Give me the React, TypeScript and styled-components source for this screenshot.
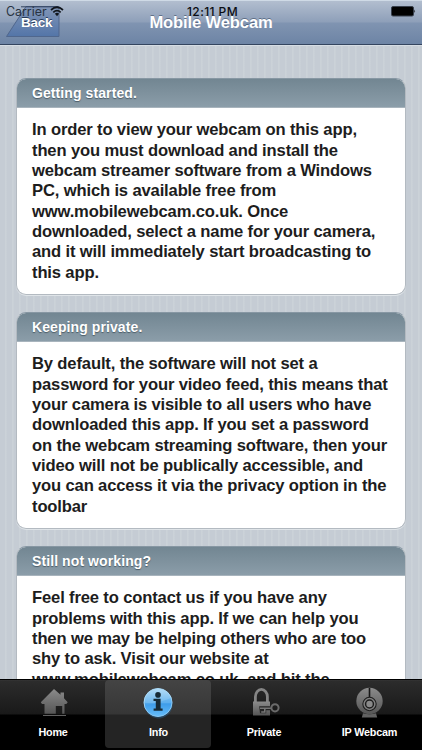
import React from 'react';
import styled, { createGlobalStyle } from 'styled-components';

const GlobalStyle = createGlobalStyle`
  * { box-sizing: border-box; }
  body { margin: 0; overflow: hidden; font-family: "Liberation Sans", Arial, sans-serif; }
`;

const Screen = styled.div`
  width: 422px;
  height: 750px;
  display: flex;
  flex-direction: column;
  overflow: hidden;
  background: repeating-linear-gradient(90deg, #c5ccd4 0, #c5ccd4 4.6px, #cbd2d8 5.4px, #cbd2d8 6.2px, #c5ccd4 7px);
`;

const NavBar = styled.header`
  position: relative;
  flex: none;
  height: 45px;
  border-top: 1px solid #cfdae6;
  border-bottom: 1px solid #34455f;
  background: linear-gradient(#b2becf 0, #8e9fb9 21px, #8094b1 22px, #6d84a5 100%);
`;

const NavTitle = styled.h1`
  position: relative;
  margin: 0;
  padding-top: 12px;
  text-align: center;
  font-size: 16.6px;
  letter-spacing: -0.15px;
  line-height: 20px;
  color: #fff;
  text-shadow: 0 -1px 0 rgba(40, 55, 80, 0.5);
`;

const BackButton = styled.button`
  position: absolute;
  left: 6px;
  top: 5px;
  width: 54px;
  height: 31px;
  padding: 0;
  border: 0;
  background: none;
  svg { display: block; }
`;

const BackLabel = styled.span`
  position: absolute;
  left: 15px;
  top: 8px;
  font: bold 13.5px/18px "Liberation Sans", Arial, sans-serif;
  letter-spacing: -0.25px;
  color: #fff;
  text-shadow: 0 -1px 0 #263956;
`;

const StatusBar = styled.div`
  position: absolute;
  inset: 3px 6px auto 6px;
  display: grid;
  grid-template-columns: 1fr auto 1fr;
  align-items: center;
  height: 15px;
  font: 12.4px/15px Inter, "Liberation Sans", sans-serif;
  color: #0b0d12;
`;

const Carrier = styled.div`
  display: flex;
  align-items: center;
  gap: 3px;
  color: #283342;
`;

const Clock = styled.div`
  font-weight: 500;
  font-size: 12px;
  letter-spacing: 0.4px;
  padding-left: 3px;
`;

const Battery = styled.svg`
  justify-self: end;
`;

const Content = styled.main`
  flex: 1;
  min-height: 0;
  overflow: hidden;
  padding: 32px 16px 0;
  border-top: 1px solid #d6dde4;
  display: flex;
  flex-direction: column;
  gap: 17px;
`;

const Card = styled.section`
  flex: none;
  height: 217px;
  border: 1px solid #b3bac1;
  border-top-color: #8797a3;
  border-radius: 10px;
  overflow: hidden;
  background: #fff;
  box-shadow: 0 1px 0 #dfe4e8;
`;

const CardHeading = styled.h2`
  margin: 0;
  height: 29px;
  padding: 0 15px;
  border-bottom: 1px solid #a8b4bd;
  background: linear-gradient(#728692, #8b9da9);
  color: #fff;
  font-size: 14px;
  letter-spacing: 0.09px;
  line-height: 28px;
  text-shadow: 0 1px 1px #4b5c67;
`;

const CardText = styled.p`
  margin: 0;
  padding: 12.4px 0 0 15px;
  font-size: 16.6px;
  letter-spacing: -0.15px;
  font-weight: bold;
  line-height: 20.35px;
  color: #1d1d1d;
  white-space: pre;
`;

const TabBar = styled.nav`
  flex: none;
  height: 71px;
  display: grid;
  grid-template-columns: 105px 106px 105px 106px;
  border-top: 1px solid #000;
  background: linear-gradient(#373737 0, #2c2c2c 1px, #191919 34px, #000 35px);
`;

const Tab = styled.button<{ $active?: boolean }>`
  display: flex;
  flex-direction: column;
  align-items: center;
  height: 68px;
  border: 0;
  border-radius: 4px;
  padding: 7px 0 0;
  background: ${(p) => (p.$active ? 'linear-gradient(#444 0, #363636 34px, #242424 35px)' : 'none')};
  svg { display: block; }
`;

const TabLabel = styled.span`
  margin-top: 6px;
  padding-left: 1px;
  font: bold 10.8px/14px "Liberation Sans", Arial, sans-serif;
  letter-spacing: -0.2px;
  color: #fff;
`;

const Gradient = ({ id }: { id: string }) => (
  <defs>
    <linearGradient id={id} x1="0" y1="0" x2="0" y2="1">
      <stop offset="0" stopColor="#8b8b8b" />
      <stop offset="1" stopColor="#555" />
    </linearGradient>
  </defs>
);

const HomeIcon = () => (
  <svg width="32" height="32" viewBox="0 0 32 32">
    <Gradient id="home" />
    <path d="M17 2L23.5 7.8V5.4H27v5.8l3.7 4.1-1.4 1.7h-1.8v9.8h-2.3V19h-6.4v7.8H7.5V17H5l-1.2-1.7z" fill="url(#home)" />
    <path d="M6 28.5h23" stroke="#606060" strokeWidth="1" />
  </svg>
);

const InfoIcon = () => (
  <svg width="32" height="32" viewBox="0 0 32 32">
    <defs>
      <linearGradient id="info" x1="0" y1="0" x2="0" y2="1">
        <stop offset="0" stopColor="#b4dcf6" />
        <stop offset=".5" stopColor="#70b9ef" />
        <stop offset=".55" stopColor="#45a0e9" />
        <stop offset="1" stopColor="#7ccbff" />
      </linearGradient>
    </defs>
    <circle cx="16" cy="15.5" r="14" fill="url(#info)" stroke="#a9daf8" />
    <path d="M2.6 18.5C11 18 21 14 29 11a14 14 0 1 1-26.4 7.5z" fill="#2792eb" opacity=".25" />
    <circle cx="16" cy="7.9" r="2.8" fill="#172a35" />
    <path d="M11.5 11.7h7.1v9.8h2v2.2h-9v-2.2h2.2v-7.5h-2.3z" fill="#172a35" />
  </svg>
);

const LockIcon = () => (
  <svg width="32" height="32" viewBox="0 0 32 32">
    <Gradient id="lock" />
    <path d="M7.4 15V9.7a6 7.3 0 0 1 12 0V15" fill="none" stroke="#858585" strokeWidth="2.8" />
    <path d="M5 14.5H22V28.5H5z" fill="url(#lock)" />
    <path d="M11.2 19.2H23v4.1h-4.8v3H12z" fill="#242424" />
    <path d="M12 21.2h11M16.8 21v4h-3.6" stroke="#777" strokeWidth="1.6" fill="none" />
    <circle cx="27" cy="20.8" r="3.6" fill="none" stroke="#6b6b6b" strokeWidth="2" />
  </svg>
);

const WebcamIcon = () => (
  <svg width="32" height="32" viewBox="0 0 32 32">
    <Gradient id="cam" />
    <circle cx="16.5" cy="14" r="13.2" fill="url(#cam)" />
    <path d="M16.5 1v10" stroke="#171717" strokeWidth="1.6" />
    <circle cx="16.5" cy="17" r="7.2" fill="#1c1c1c" />
    <circle cx="16.5" cy="17" r="5.4" fill="none" stroke="#808080" strokeWidth="1.5" />
    <circle cx="16.5" cy="17" r="3.2" fill="#8a8a8a" />
    <path d="M10 26.2q6.5 2 13 0l1.2 4.2H8.8z" fill="#626262" />
  </svg>
);

const cards = [
  {
    title: 'Getting started.',
    text: `In order to view your webcam on this app,
then you must download and install the
webcam streamer software from a Windows
PC, which is available free from
www.mobilewebcam.co.uk. Once
downloaded, select a name for your camera,
and it will immediately start broadcasting to
this app.`,
  },
  {
    title: 'Keeping private.',
    text: `By default, the software will not set a
password for your video feed, this means that
your camera is visible to all users who have
downloaded this app. If you set a password
on the webcam streaming software, then your
video will not be publically accessible, and
you can access it via the privacy option in the
toolbar`,
  },
  {
    title: 'Still not working?',
    text: `Feel free to contact us if you have any
problems with this app. If we can help you
then we may be helping others who are too
shy to ask. Visit our website at
www.mobilewebcam.co.uk, and hit the`,
  },
];

const tabs = [
  { label: 'Home', Icon: HomeIcon },
  { label: 'Info', Icon: InfoIcon, active: true },
  { label: 'Private', Icon: LockIcon },
  { label: 'IP Webcam', Icon: WebcamIcon },
];

export default function App() {
  return (
    <>
      <GlobalStyle />
      <Screen>
        <NavBar>
          <BackButton>
            <svg width="54" height="31" viewBox="0 0 54 31">
              <defs>
                <linearGradient id="back" x1="0" y1="0" x2="0" y2="1">
                  <stop offset="0" stopColor="#8296b8" />
                  <stop offset="1" stopColor="#5375a8" />
                </linearGradient>
              </defs>
              <path d="M.5 30.5L20 .5h33v30z" fill="url(#back)" stroke="#50678d" />
              <path d="M15 .8h37" stroke="#33445e" />
            </svg>
            <BackLabel>Back</BackLabel>
          </BackButton>
          <StatusBar>
            <Carrier>
              Carrier
              <svg width="14" height="11" viewBox="0 0 14 11">
                <path d="M1 4q6-5.5 12 0M3.3 6.3q3.7-3.3 7.4 0" fill="none" stroke="#10151c" strokeWidth="1.7" />
                <path d="M4.9 7.7q2.1-1.8 4.2 0L7 10.2z" fill="#10151c" />
              </svg>
            </Carrier>
            <Clock>12:11 PM</Clock>
            <Battery width="26" height="11" viewBox="0 0 26 11">
              <rect x="1.5" y=".5" width="22" height="9.5" rx="1.5" fill="#000" stroke="#38404d" />
              <path d="M24.3 3.5q1.7 1.8 0 3.6z" fill="#111" />
            </Battery>
          </StatusBar>
          <NavTitle>Mobile Webcam</NavTitle>
        </NavBar>
        <Content>
          {cards.map((card) => (
            <Card key={card.title}>
              <CardHeading>{card.title}</CardHeading>
              <CardText>{card.text}</CardText>
            </Card>
          ))}
        </Content>
        <TabBar>
          {tabs.map(({ label, Icon, active }) => (
            <Tab key={label} $active={active}>
              <Icon />
              <TabLabel>{label}</TabLabel>
            </Tab>
          ))}
        </TabBar>
      </Screen>
    </>
  );
}
